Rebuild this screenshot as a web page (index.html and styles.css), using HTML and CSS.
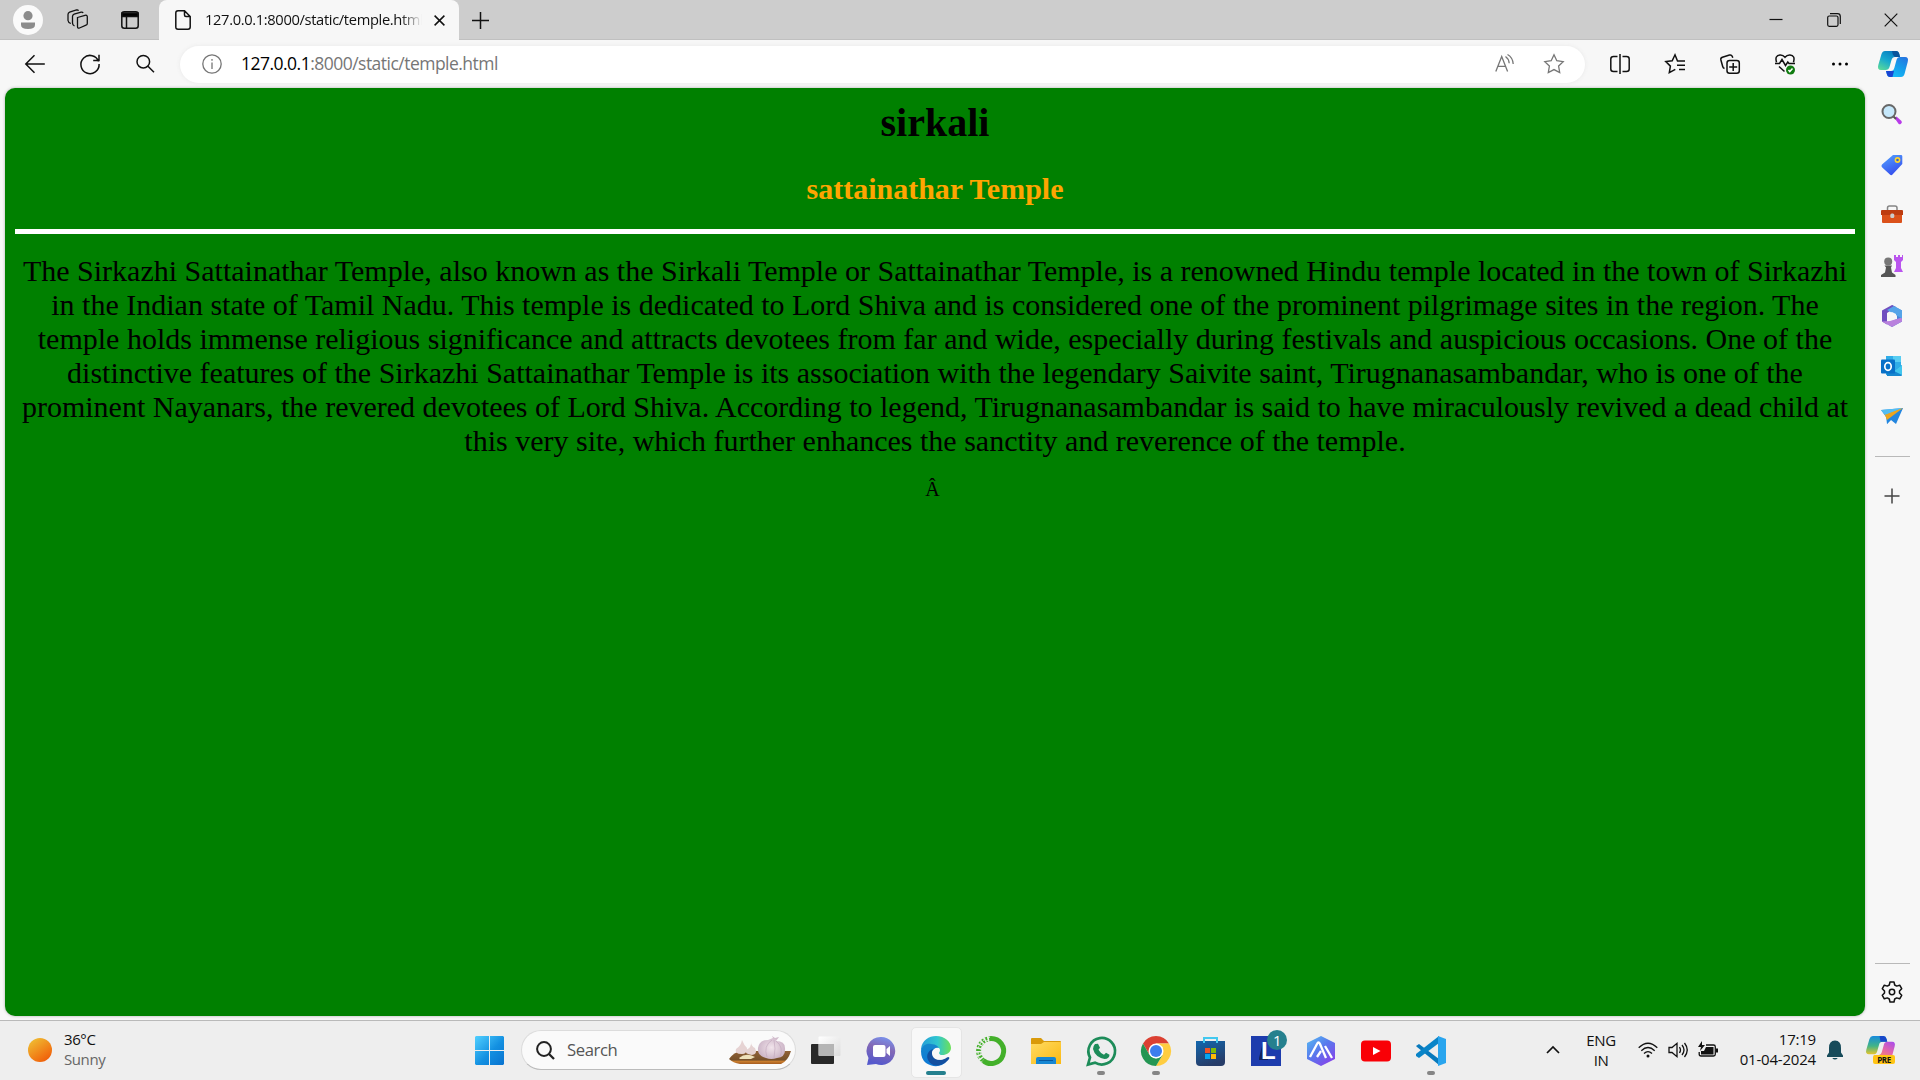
FILE: index.html
```html
<!DOCTYPE html>
<html lang="en">
<head>
<meta charset="utf-8">
<title>127.0.0.1:8000/static/temple.html</title>
<link rel="stylesheet" href="styles.css">
</head>
<body>
<div class="screen">
  <header class="tabstrip">
    <div class="tab-tools">
      <svg class="avatar" viewBox="0 0 30 30"><circle cx="15" cy="15" r="15" fill="#fafafa"/><circle cx="15" cy="10.7" r="4.6" fill="#8c8c8c"/><path d="M8 17.5h14v2.2q0 4.3-7 4.3t-7-4.3z" fill="#8c8c8c"/></svg>
      <svg class="line workspaces" viewBox="0 0 22 22"><path d="M10.500 8.500l7.500-2.200q2-.5 2.300 1.200v7q0 1.300-1.300 1.700l-6.500 2.800q-2 .7-2-1.500zM7.500 17Q5.500 16 5.500 14V7.500q0-1.800 1.600-2.400l7-2q1.500-.3 2 .8M3.800 14.500Q1.200 13.500 1 11.500V5.500Q1 3.700 2.600 3.100L9.500 1q1.500-.3 2 .8"/></svg>
      <svg class="line tabmenu" viewBox="0 0 18 18"><rect x=".8" y=".8" width="16.400" height="16.400" rx="2.500"/><path d="M1 2h16v3.500H1z" fill="#000"/><path d="M5.500 6v11"/></svg>
    </div>
    <div class="tab">
      <svg class="line page-icon" viewBox="0 0 16 20"><path d="M3 .8h6.500L15.200 6.500V17q0 2.200-2.200 2.200H3Q.8 19.200.8 17V3Q.8.800 3 .8zM9.500 1v4q0 1.500 1.500 1.500h4"/></svg>
      <span class="tab-title">127.0.0.1:8000/static/temple.html</span>
      <svg class="line tab-close" viewBox="0 0 11 11"><path d="M.6.6l9.800 9.800M10.400.6L.6 10.400"/></svg>
    </div>
    <svg class="line new-tab" viewBox="0 0 17 17"><path d="M8.500 0v17M0 8.500h17"/></svg>
    <div class="window-buttons">
      <svg class="line" viewBox="0 0 14 14"><path d="M.5 6.500h13"/></svg>
      <svg class="line" viewBox="0 0 14 14"><rect x=".7" y="3" width="10.300" height="10.300" rx="1.500"/><path d="M3 .7h7.500q2.800 0 2.800 2.800V11"/></svg>
      <svg class="line" viewBox="0 0 14 14"><path d="M.7.7l12.600 12.600M13.300.7L.7 13.300"/></svg>
    </div>
  </header>

  <nav class="toolbar">
    <div class="nav-buttons">
      <svg class="line" viewBox="0 0 20 20"><path d="M19.800 10H1M9.500 1.300L.8 10l8.700 8.700"/></svg>
      <svg class="line" viewBox="0 0 20 20"><path d="M18.600 7.500A9.100 9.100 0 1 0 19.100 10M19 .8v5.700h-5.800"/></svg>
      <svg class="line" viewBox="0 0 20 20"><circle cx="8.300" cy="7.700" r="6.300"/><path d="M13 12.300l6 6"/></svg>
    </div>
    <div class="address">
      <svg class="gray info" viewBox="0 0 20 20"><circle cx="10" cy="10" r="9.200"/><path d="M10 8.500V15M10 5v1.700"/></svg>
      <span class="url"><b>127.0.0.1</b>:8000/static/temple.html</span>
      <svg class="gray read" viewBox="0 0 20 20"><path d="M.8 17.500L6.700 2.500l5.900 15M3 12.300h7.600M10.500 2.500q3.300 2.300 3.700 6.700M12.500.5q5.300 3 5.700 9.500"/></svg>
      <svg class="gray star" viewBox="0 0 20 20"><path d="M10 .8l2.800 5.900 6.400.9-4.600 4.500 1.100 6.500-5.700-3-5.700 3 1.100-6.500L.8 7.600l6.400-.9z"/></svg>
    </div>
    <div class="actions">
      <svg class="line" viewBox="0 0 20 20"><path d="M10 0v20M7.500 2.500H3.500Q.8 2.500.8 5v10q0 2.500 2.700 2.500h4M12.500 2.500h4Q19.200 2.500 19.200 5v10q0 2.500-2.700 2.500h-4"/></svg>
      <svg class="line" viewBox="0 0 20 20"><path d="M14 7h-1.500L10 .8 7.200 6.700.8 7.600l4.600 4.500-1.100 6.500 6-3.200M14 7h6M12 11.200h8M14 15.400h6"/></svg>
      <svg class="line" viewBox="0 0 20 20"><rect x="7" y="6.500" width="12.300" height="12.700" rx="2.500"/><path d="M13.200 9v8M9.200 13h8M4.500 14.500Q3 14 2.700 12.500L.9 6q-.5-2 1.500-2.700L9.500 1q2-.5 2.700 1.300l.6 1.500"/></svg>
      <svg class="line" viewBox="0 0 20 20"><path d="M1.500 8.200Q-.5 1.500 5 .9q3-.2 5 2.300 2-2.500 5-2.300 5.500.6 3.500 7.300M0 9.500h4.500L7 5.500l3.500 6 2.300-3.500 1.200 1.500h6M4 12.500l5.500 5"/><circle cx="15.500" cy="16" r="4.500" fill="#107c10" stroke="none"/><path d="M13.500 16l1.300 1.500 2.700-3" stroke="#fff"/></svg>
      <svg viewBox="0 0 20 20"><circle cx="3.500" cy="10" r="1.500"/><circle cx="10" cy="10" r="1.500"/><circle cx="16.500" cy="10" r="1.500"/></svg>
    </div>
    <svg class="copilot" viewBox="0 0 30 26"><defs><linearGradient id="ca" x1="0" y1="1" x2=".6" y2="0"><stop stop-color="#62df94"/><stop offset=".55" stop-color="#17a9cf"/><stop offset="1" stop-color="#087fc1"/></linearGradient><linearGradient id="cb" x1="1" y1="0" x2=".3" y2="1"><stop stop-color="#2970df"/><stop offset=".5" stop-color="#159bea"/><stop offset="1" stop-color="#18bdf8"/></linearGradient></defs><path d="M7 0h11q2.500 0 3.300 3L22 6h-5q-2.700 0-3.500 3l-2 7q-.8 3-4 3H3Q-1 19 .3 14L3.500 3Q4.500 0 7 0z" fill="url(#ca)"/><path d="M14 0h4q2.500 0 3.300 3L22 6h-4q-3 0-4-6z" fill="#09559c"/><path d="M8 20h5q2.500 0 3.300-3l2.200-8q.8-3 3.500-3h5q4 0 2.700 5l-3.200 12q-.8 3-3.500 3H12q-2.500 0-3.200-3z" fill="url(#cb)"/><path d="M8 20h8l-1.500 6H12q-2.500 0-3.200-3z" fill="#1945d3"/></svg>
  </nav>

  <div class="browser-body">
    <main class="webpage">
      <h1>sirkali</h1>
      <h2>sattainathar Temple</h2>
      <hr>
      <p class="story">The Sirkazhi Sattainathar Temple, also known as the Sirkali Temple or Sattainathar Temple, is a renowned Hindu temple located in the town of Sirkazhi<br>in the Indian state of Tamil Nadu. This temple is dedicated to Lord Shiva and is considered one of the prominent pilgrimage sites in the region. The<br>temple holds immense religious significance and attracts devotees from far and wide, especially during festivals and auspicious occasions. One of the<br>distinctive features of the Sirkazhi Sattainathar Temple is its association with the legendary Saivite saint, Tirugnanasambandar, who is one of the<br>prominent Nayanars, the revered devotees of Lord Shiva. According to legend, Tirugnanasambandar is said to have miraculously revived a dead child at<br>this very site, which further enhances the sanctity and reverence of the temple.</p>
      <p class="stray">Â&nbsp;</p>
    </main>
    <aside class="sidebar">
      <div class="side-apps">
        <svg viewBox="0 0 22 22"><path d="M13.500 14l2-1.500 5 4.500q1 1.500-.5 2.700t-2.500 0z" fill="#b83be9"/><path d="M12 12l3 3" stroke="#555" stroke-width="2"/><circle cx="8" cy="7.500" r="6.500" fill="#c6e8fb" stroke="#686868" stroke-width="2"/></svg>
        <svg viewBox="0 0 22 22"><defs><linearGradient id="tg" x2=".5" y2="1"><stop stop-color="#55a5ff"/><stop offset="1" stop-color="#3650ee"/></linearGradient></defs><path d="M12 1h8q1.300 0 1.300 1.300V10L11.500 20.500q-1.300 1.300-2.600 0L1 13.300q-1.200-1.300 0-2.700z" fill="url(#tg)"/><circle cx="16.500" cy="6" r="2.100" fill="#3863c9" stroke="#ffd52e" stroke-width="1.600"/></svg>
        <svg viewBox="0 0 22 22"><path d="M6.500 6.500V4q0-2 2-2h5.500q2 0 2 2v2.500" fill="none" stroke="#858585" stroke-width="1.500"/><path d="M1 6h20q1 0 1 1v4H0V7q0-1 1-1z" fill="#bd3c10"/><path d="M1 11h20v7q0 1-1 1H2q-1 0-1-1z" fill="#db511a"/><rect x="9.300" y="9.500" width="4" height="4.500" rx="1.500" fill="#ccc"/></svg>
        <svg viewBox="0 0 22 22"><path d="M13 0h2v2h2V0h2v2h2V0h1v5l-2 2v6l2 4h-9l2-4V7l-2-2z" fill="#ba55ee"/><circle cx="7.200" cy="6.500" r="4" fill="#777"/><path d="M3.500 10.500h7.500l-1 2 1 5 3.500 2.500v2H0v-2l4-2.500 1-5z" fill="#555"/></svg>
        <svg viewBox="0 0 22 22"><path d="M11 0l10 5.500v11L11 22l-5-3 5-3 5-2V8l-5-2z" fill="#4b83d9"/><path d="M11 0L1 5.500v11l5 3V8l9-6z" fill="#704fc0"/><path d="M1 16.500L11 22l10-5.500v-4L9 16z" fill="#b981dd"/><path d="M6 5l7-4 8 4.500v8z" fill="#55a4e8"/><path d="M11 7l4 2v4l-4 2-4-2V9z" fill="#f7f7f7"/></svg>
        <svg viewBox="0 0 22 22"><path d="M5 1h15v19H5z" fill="#30ade8"/><path d="M12 1h8v6h-8z" fill="#58cdf2"/><path d="M5 11l8 5 8-6v10q0 1-1 1H6z" fill="#1687cf"/><path d="M13 16l8-6v10z" fill="#42c6ee"/><rect y="4.500" width="14" height="14" rx="1" fill="#0871c8"/><ellipse cx="7" cy="11.500" rx="3.200" ry="3.800" fill="none" stroke="#fff" stroke-width="1.700"/></svg>
        <svg viewBox="0 0 22 22"><path d="M0 5l22-2-8.500 14-3.500-2.500L6 19l-1-7z" fill="#3b9bea"/><path d="M3 9L22 3 6 14l-1-3z" fill="#e9a126"/><path d="M0 5l22-2L4 10z" fill="#54bdf2"/><path d="M22 3L6 12v7l4-4 5 4z" fill="#2386df"/><path d="M22 3L4 10l2 5z" fill="#eca51f"/></svg>
      </div>
      <div class="side-rule"></div>
      <svg class="line side-add" viewBox="0 0 16 16"><path d="M8 .5v15M.5 8h15" stroke="#444"/></svg>
      <div class="side-rule bottom-rule"></div>
      <svg class="line gear" viewBox="0 0 22 22"><path d="M9 1h4l.7 3 2 1.100 3-.9 2 3.500L18.500 10v2l2.200 2.300-2 3.500-3-.9-2 1.100-.7 3H9l-.7-3-2-1.100-3 .9-2-3.500L3.500 12v-2L1.300 7.700l2-3.500 3 .9 2-1.100z" stroke-linejoin="round"/><circle cx="11" cy="11" r="2.700"/></svg>
    </aside>
  </div>

  <footer class="taskbar">
    <div class="weather">
      <svg viewBox="0 0 24 24"><defs><linearGradient id="sun" x1=".1" x2=".8" y2="1"><stop stop-color="#efc335"/><stop offset=".75" stop-color="#f17412"/><stop offset="1" stop-color="#ee5a08"/></linearGradient></defs><circle cx="12" cy="12" r="12" fill="url(#sun)"/></svg>
      <div class="weather-text"><div>36°C</div><div class="muted">Sunny</div></div>
    </div>
    <svg class="start" viewBox="0 0 29 29"><defs><linearGradient id="win" x2="1" y2="1"><stop stop-color="#51d0ff"/><stop offset=".55" stop-color="#1390e1"/><stop offset="1" stop-color="#0872cf"/></linearGradient></defs><path d="M1 0h13v14H0V1zM15 0h13l1 1v13H15zM0 15h14v14H1l-1-1zM15 15h14v13l-1 1H15z" fill="url(#win)"/></svg>
    <div class="search">
      <svg class="magnifier" viewBox="0 0 19 19"><circle cx="8" cy="8" r="6.900" fill="none" stroke="#222" stroke-width="2"/><path d="M13 13l5 5" stroke="#222" stroke-width="2.300"/></svg>
      <span>Search</span>
      <svg class="garlic" viewBox="0 0 62 30"><defs><linearGradient id="wood" x2="0" y2="1"><stop stop-color="#916237"/><stop offset=".7" stop-color="#76502a"/><stop offset=".78" stop-color="#cd812f"/><stop offset="1" stop-color="#a65c20"/></linearGradient><radialGradient id="bulb"><stop stop-color="#f1e4eb"/><stop offset="1" stop-color="#cdb6c8"/></radialGradient></defs><path d="M0 24q5-7 12-8h50q-3 10-10 13H11Q4 28 0 24z" fill="url(#wood)"/><path d="M10 23q7-6 16-1l-4 2H11z" fill="#eee0b9"/><path d="M13 5q2 5 5 8 0 6-5 6-8 0-6-5 5-3 6-9zM22 7q0 4 4 6 3 6-3 7-8-1-6-5 6-3 5-8z" fill="#e6d3d3"/><path d="M43 1l3 2 4-1-3 4q9 0 9 7 1 9-8 10-6 2-11 0-9-2-8-10 1-8 10-8l5-2z" fill="url(#bulb)"/><path d="M43 5q-9 6-5 17M45 5q2 8 0 18M47 6q8 6 4 16" fill="none" stroke="#bfa5ba" stroke-width=".6"/></svg>
    </div>
    <div class="apps">
      <div class="app"><svg viewBox="0 0 30 30"><defs><linearGradient id="tv" x2="1" y2="1"><stop stop-color="#fff"/><stop offset="1" stop-color="#ddd"/></linearGradient></defs><rect y="8" width="23" height="20" rx="1" fill="#282828"/><rect x="7.500" y=".5" width="22" height="19.500" rx="1" fill="url(#tv)"/><path d="M8 8h15v12H8z" fill="#b5b5b5"/></svg></div>
      <div class="app"><svg viewBox="0 0 30 30"><defs><linearGradient id="chat" x1=".8" x2=".5" y2="1"><stop stop-color="#7895f0"/><stop offset=".45" stop-color="#8268b6"/><stop offset="1" stop-color="#5559cc"/></linearGradient></defs><path d="M15 1a14 14 0 1 1-5 27L1 29l1.500-7A14 14 0 0 1 15 1z" fill="url(#chat)"/><rect x="7" y="9" width="12.500" height="12" rx="2" fill="#fff"/><path d="M20.500 13l3.500-3v10l-3.500-3z" fill="#fff"/></svg></div>
      <div class="app active"><svg viewBox="0 0 30 30"><defs><linearGradient id="e1"><stop stop-color="#249dd8"/><stop offset=".55" stop-color="#30c6cf"/><stop offset="1" stop-color="#6de157"/></linearGradient><linearGradient id="e2" x2="0" y2="1"><stop stop-color="#1688cc"/><stop offset="1" stop-color="#0c78d7"/></linearGradient></defs><path d="M0 13C1 4 8 0 15 0c9 0 15 6 15 12 0 7-11 9-13 5 2-4 0-6-3-6C7 8 2 9 0 15z" fill="url(#e1)"/><path d="M0 15C1 9 6 7 10 8c5 0 9 3 8 7-4-5-10 1-7 6 3 7 10 8 15 4-6 7-15 6-21 2Q0 23 0 15z" fill="url(#e2)"/><path d="M12 13c-4 8 4 15 15 8q2 0 1 2c-6 8-17 9-21 1-2-5 0-9 5-11z" fill="#124fa0"/><path d="M18 12q-6-1-6 5 1 4 4 6 4 2 9-1-6-1-7-5 2-3 0-5z" fill="#f8f8f8"/></svg><i></i></div>
      <div class="app"><svg viewBox="0 0 30 30"><path d="M15 2.500a12.500 12.500 0 1 1-8 22" fill="none" stroke="#43b02a" stroke-width="5"/><path d="M15 2.500A12.500 12.500 0 0 0 7 24.500" fill="none" stroke="#43b02a" stroke-width="5" stroke-dasharray="2 1.500"/><path d="M14 1Q2 5 2 15t6 13M12 4Q4 8 5 18" fill="none" stroke="#eee" stroke-dasharray="3 2"/></svg></div>
      <div class="app"><svg viewBox="0 0 30 30"><defs><linearGradient id="fold" x2="1" y2="1"><stop stop-color="#ffdb62"/><stop offset="1" stop-color="#fbb912"/></linearGradient></defs><path d="M0 3q0-1 1-1h9l3 3h16q1 0 1 1v6H0z" fill="#d99a0a"/><path d="M0 8h10l3-2h17v22H0z" fill="url(#fold)"/><path d="M5 28v-5q0-2 2-2h16q2 0 2 2v5z" fill="#1687d3"/><path d="M8 24.500h14" stroke="#07589f"/></svg></div>
      <div class="app running"><svg viewBox="0 0 30 30"><path d="M2 28.500l2-7A13.300 13.300 0 1 1 9 26.700z" fill="none" stroke="#1d8c59" stroke-width="2.700"/><path d="M9 8l3-.3 2 4-1.500 2q2 3.500 5.500 5l2-2 3.500 2q0 4-5 4.300Q9 21 7 13q0-3 2-5z" fill="#1d8c59"/></svg><i></i></div>
      <div class="app running"><svg viewBox="0 0 30 30"><path d="M2 7.500A15 15 0 0 1 28 7.500H15L8.500 19z" fill="#db4032"/><path d="M28 7.500A15 15 0 0 1 15 30l6.500-11L22 11l-7-3.500z" fill="#ffcd40"/><path d="M15 30A15 15 0 0 1 2 7.500L8.500 19l6.500 3.500 6.500-3.500z" fill="#249653"/><circle cx="15" cy="15" r="7.500" fill="#fff"/><circle cx="15" cy="15" r="6" fill="#3b7ded"/></svg><i></i></div>
      <div class="app"><svg viewBox="0 0 30 30"><defs><linearGradient id="shop" x2=".4" y2="1"><stop stop-color="#1267ae"/><stop offset="1" stop-color="#263c68"/></linearGradient></defs><path d="M0 5h29v21q0 4-4 4H4q-4 0-4-4z" fill="url(#shop)"/><path d="M8 7V2h13v5" fill="none" stroke="#42c8ef" stroke-width="2"/><path d="M9 12h5v5H9z" fill="#f35325"/><path d="M15 12h5v5h-5z" fill="#81bc06"/><path d="M9 18h5v5H9z" fill="#05a6f0"/><path d="M15 18h5v5h-5z" fill="#ffba08"/></svg></div>
      <div class="app"><svg viewBox="0 0 30 30"><path d="M0 0h30v30H0z" fill="#1d3cad"/><path d="M12 6L8 22v2h9z" fill="#10235e"/></svg><strong>L</strong><span class="badge">1</span></div>
      <div class="app"><svg viewBox="0 0 30 30"><defs><linearGradient id="aa" x2=".8" y2="1"><stop stop-color="#55bdf2"/><stop offset=".5" stop-color="#5878ed"/><stop offset="1" stop-color="#8841ea"/></linearGradient></defs><path d="M15 0l14 7v16l-14 7-14-7V7z" fill="url(#aa)"/><path d="M4 21L11 8q1.500-3 3 0l6 14M11 21l4-6M19 10l7 12" fill="none" stroke="#fff" stroke-width="2.300"/></svg></div>
      <div class="app"><svg viewBox="0 0 30 30"><rect y="4.500" width="30" height="21" rx="4" fill="#f90006"/><path d="M12 11l7.500 4-7.500 4z" fill="#fff"/></svg></div>
      <div class="app running"><svg viewBox="0 0 30 30"><path d="M0 10l3-2 20 15v6L1 11z" fill="#0879bc"/><path d="M0 20l3 2L23 7V0L0 18z" fill="#0984c8"/><path d="M22 0l8 3v24l-8 3z" fill="#29a5ee"/></svg><i></i></div>
    </div>
    <div class="tray">
      <svg class="line chevron" viewBox="0 0 14 8"><path d="M1 7l6-6 6 6" stroke-width="1.700"/></svg>
      <div class="language">ENG<br>IN</div>
      <svg class="line tray-icon" viewBox="0 0 20 16"><path d="M.7 5.700q9.300-9 18.600 0M3.300 8.700q6.700-6.400 13.400 0M6 11.500q4-3.700 8 0"/><circle cx="10" cy="14" r="1.500" fill="#111" stroke="none"/></svg>
      <svg class="line tray-icon" viewBox="0 0 20 16"><path d="M1 5.500h3L9 1.300v13.400L4 10.500H1zM11.500 5q2 3 0 6M14 3q4 5 0 10M16.500 1q5.500 7 0 14"/></svg>
      <svg class="line tray-icon" viewBox="0 0 20 16"><path d="M8 3h7.500q1.800 0 1.800 1.800v7.400q0 1.800-1.800 1.800H3q-1.800 0-1.800-1.800V10"/><path d="M8 5h7.500v7.500H3V9h3zM18 6.500h2v4h-2zM4-1L0 5h3L2 9l5-6H4z" fill="#111" stroke="none"/></svg>
      <div class="clock">17:19<br>01-04-2024</div>
      <svg class="bell" viewBox="0 0 16 20"><path d="M2 8q0-7.500 6-7.500T14 8v4.500l2 3V17H0v-1.500l2-3zM5.200 18h5.600Q8 21 5.200 18z" fill="#174b5a"/></svg>
      <div class="preview"><svg viewBox="0 0 30 26"><defs><linearGradient id="pa" x2="0" y2="1"><stop stop-color="#168bdd"/><stop offset=".55" stop-color="#43b486"/><stop offset="1" stop-color="#e5c52d"/></linearGradient><linearGradient id="pb" x1="1" x2=".3" y2="1"><stop stop-color="#a54af0"/><stop offset=".55" stop-color="#e466a9"/><stop offset="1" stop-color="#fb8c66"/></linearGradient></defs><path d="M7 0h11q2.500 0 3.300 3L22 6h-5q-2.700 0-3.500 3l-2 7q-.8 3-4 3H3Q-1 19 .3 14L3.500 3Q4.500 0 7 0z" fill="url(#pa)"/><path d="M14 0h4q2.500 0 3.300 3L22 6h-7z" fill="#1747c9"/><path d="M8 20h5q2.500 0 3.300-3l2.200-8q.8-3 3.500-3h5q4 0 2.700 5l-3.200 12H10z" fill="url(#pb)"/></svg><b>PRE</b></div>
    </div>
  </footer>
</div>
</body>
</html>
```
FILE: styles.css
```css
* { box-sizing: border-box; }
body { margin: 0; background: #f7f7f7; }
svg { display: block; flex: none; overflow: visible; }
.line { fill: none; stroke: #111; stroke-width: 1.5; }
.gray { fill: none; stroke: #767676; stroke-width: 1.3; }
.screen {
  width: 1920px; height: 1080px; overflow: hidden;
  display: flex; flex-direction: column;
  font-family: "Open Sans", "Noto Sans", sans-serif; color: #111;
}

/* Tab strip */
.tabstrip { height: 40px; flex: none; display: flex; align-items: center; background: #cdcdcd; box-shadow: inset 0 -1px #c0c0c0; }
.tab-tools { width: 159px; display: flex; align-items: center; padding-left: 13px; }
.avatar { width: 30px; height: 30px; }
.workspaces { width: 22px; height: 22px; margin-left: 24px; stroke-width: 1.3; }
.tabmenu { width: 18px; height: 18px; margin-left: 32px; }
.tab { width: 300px; height: 40px; display: flex; align-items: center; padding: 0 14px 0 16px; background: #f7f7f7; border-radius: 8px 8px 0 0; }
.page-icon { width: 16px; height: 20px; }
.tab-title { width: 218px; margin: -2px 11px 0 14px; overflow: hidden; white-space: nowrap; font-size: 14.7px; letter-spacing: -.35px; line-height: 24px; -webkit-mask-image: linear-gradient(90deg, #000 90%, transparent); mask-image: linear-gradient(90deg, #000 90%, transparent); }
.tab-close { width: 11px; height: 11px; margin-left: 1px; }
.new-tab { width: 17px; height: 17px; margin-left: 13px; }
.window-buttons { margin-left: auto; display: flex; gap: 43.5px; padding-right: 22px; }
.window-buttons svg { width: 14px; height: 14px; stroke-width: 1.2; }

/* Toolbar */
.toolbar { height: 48px; flex: none; display: flex; align-items: center; background: #f7f7f7; }
.nav-buttons { width: 180px; padding-left: 25px; display: flex; gap: 35px; }
.nav-buttons svg, .actions svg { width: 20px; height: 20px; }
.address { width: 1405px; height: 37px; display: flex; align-items: center; padding: 0 21px 0 22px; border-radius: 19px; background: #fff; box-shadow: 0 0 4px #e8e8e8; }
.info { width: 20px; height: 20px; }
.url { margin: -2px 0 0 19px; font-size: 17.5px; line-height: 24px; letter-spacing: -.52px; color: #767676; }
.url b { font-weight: 400; color: #000; }
.read { width: 20px; height: 20px; margin-left: auto; }
.star { width: 20px; height: 20px; margin-left: 29px; }
.actions { display: flex; gap: 35.2px; margin-left: 24.5px; }
.copilot { width: 30px; height: 26px; margin-left: 27.5px; }

/* Page viewport and side panel */
.browser-body { height: 932px; flex: none; display: flex; padding: 0 0 4px 5px; }
.webpage { width: 1860px; height: 928px; padding: 11px 10px 10px; border-radius: 10px; background: #008000; box-shadow: 0 0 3px #aaa; font-family: "Liberation Serif", serif; color: #000; text-align: center; }
.webpage h1 { margin: 0 0 26px; font-size: 40px; line-height: 47px; }
.webpage h2 { margin: 0 0 24px; font-size: 30px; line-height: 33px; color: orange; }
.webpage hr { height: 5px; margin: 0; border: 0; background: #fff; }
.story { margin: 20px 0; font-size: 30px; line-height: 34px; white-space: nowrap; }
.stray { margin: 0; font-size: 20px; line-height: 23px; }
.sidebar { width: 55px; display: flex; flex-direction: column; align-items: center; padding: 2px 1px 0 0; }
.side-apps { display: flex; flex-direction: column; gap: 28.2px; padding-top: 14px; }
.side-apps svg { width: 22px; height: 22px; }
.side-rule { width: 35px; height: 1px; flex: none; margin-top: 29px; background: #b9b9b9; }
.side-add { width: 16px; height: 16px; margin-top: 31px; }
.bottom-rule { margin-top: auto; }
.gear { width: 22px; height: 22px; margin: 17px 0 13px; }

/* Taskbar */
.taskbar { height: 60px; flex: none; display: flex; align-items: center; border-top: 1px solid #b9b9b9; background: #eee; font-size: 15px; line-height: 20px; letter-spacing: -.4px; }
.weather { width: 475px; padding: 0 0 2px 28px; display: flex; align-items: center; gap: 12px; }
.weather svg { width: 24px; height: 24px; }
.weather-text { padding-bottom: 2px; }
.muted { color: #666; }
.start { width: 29px; height: 29px; }
.search { width: 275px; height: 40px; margin: -1px 0 0 17px; padding: 0 4px 0 14px; display: flex; align-items: center; border: 1px solid #dcdcdc; border-bottom-color: #bbb; border-radius: 20px; background: #fafafa; color: #555; font-size: 16.7px; }
.magnifier { width: 19px; height: 19px; margin-right: 12px; }
.garlic { width: 62px; height: 30px; margin-left: auto; }
.apps { display: flex; margin-left: 2px; }
.app { width: 55px; height: 48px; display: flex; align-items: center; justify-content: center; position: relative; }
.app > svg { width: 30px; height: 30px; }
.active::before { content: ""; position: absolute; z-index: -1; left: 3px; top: 0; width: 49px; height: 49px; border: 1px solid #e5e5e5; border-radius: 5px; background: #f8f8f8; }
.active { z-index: 0; }
.app i { position: absolute; left: 23.500px; bottom: 0; width: 8px; height: 4px; border-radius: 2px; background: #858585; }
.app.active i { left: 17.500px; width: 20px; background: #25808e; }
.app strong { position: absolute; left: 23px; top: 11px; color: #fff; font: bold 24px/26px "Liberation Sans", sans-serif; }
.badge { position: absolute; left: 29px; top: 3px; width: 20px; height: 20px; border-radius: 50%; background: #25808e; color: #fff; text-align: center; }
.tray { display: flex; align-items: center; margin: -2px 0 0 88px; }
.chevron { width: 14px; height: 8px; }
.language { width: 82px; text-align: center; }
.tray-icon { width: 20px; height: 16px; margin-right: 10px; stroke-width: 1.3; }
.language + .tray-icon { margin-left: -4px; }
.clock { width: 88px; margin-top: -1px; text-align: right; letter-spacing: -.2px; }
.bell { width: 16px; height: 20px; margin-left: 11px; }
.preview { position: relative; margin-left: 23px; }
.preview svg { width: 29px; height: 25px; margin-bottom: 3px; }
.preview b { position: absolute; left: 7px; bottom: 0; width: 22px; height: 9px; border-radius: 2px; background: #ffc414; font: bold 8px/9px "Open Sans", sans-serif; text-align: center; }
```
